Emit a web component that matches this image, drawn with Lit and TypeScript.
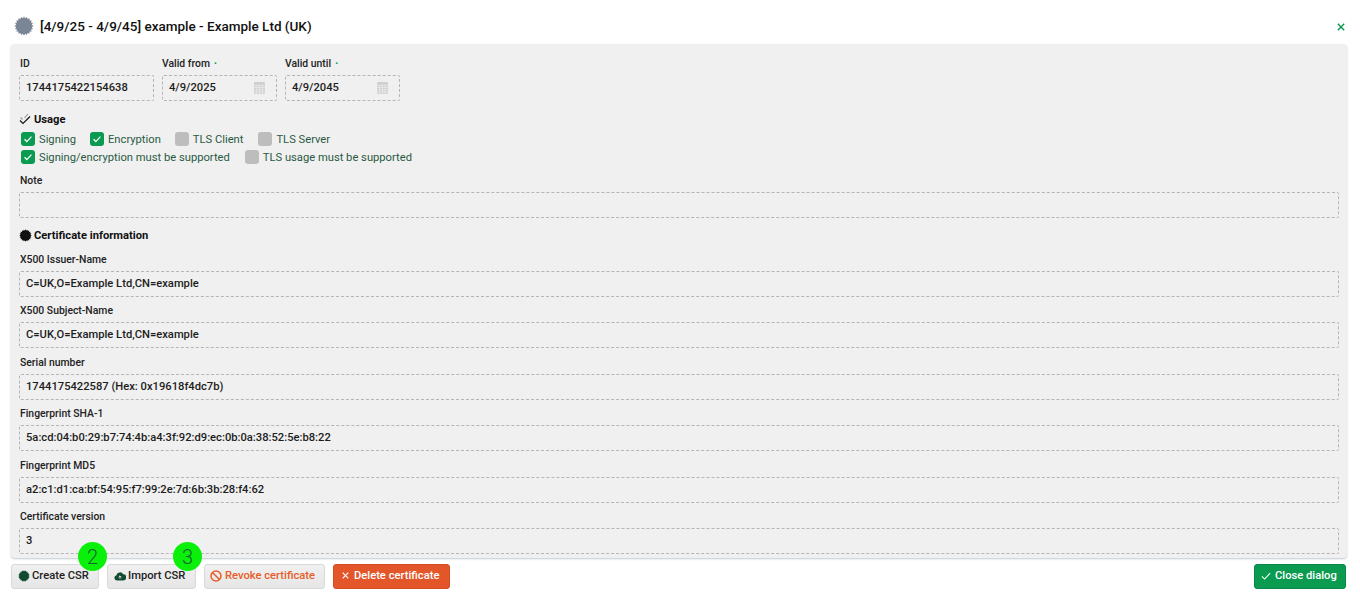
import { LitElement, html, css, svg } from "lit";
import { customElement } from "lit/decorators.js";

const seal = (size: number, color: string) => {
  const pts: string[] = [];
  const n = 20;
  for (let i = 0; i < n * 2; i++) {
    const r = i % 2 ? 9.4 : 11.4;
    const a = (Math.PI * i) / n;
    pts.push(`${(12 + r * Math.sin(a)).toFixed(2)},${(12 - r * Math.cos(a)).toFixed(2)}`);
  }
  return html`<svg class="ic" width=${size} height=${size} viewBox="0 0 24 24">${svg`<polygon points=${pts.join(" ")} fill=${color}></polygon>`}</svg>`;
};
const check = (color: string, w = 14, sw = 1.6) =>
  html`<svg class="ic" width=${w} height=${w} viewBox="0 0 16 16" fill="none" stroke=${color} stroke-width=${sw}><path d="M2.5 8.5l3.6 3.6 7.4-8"></path></svg>`;
const cross = (color: string, w = 10, sw = 1.8) =>
  html`<svg class="ic" width=${w} height=${w} viewBox="0 0 10 10" fill="none" stroke=${color} stroke-width=${sw}><path d="M1 1l8 8M9 1l-8 8"></path></svg>`;
const calendar = html`<svg class="cal" width="11" height="12" viewBox="0 0 12 13"><rect width="12" height="13" rx="1" fill="#cfcfcf"></rect><path d="M0 3.5h12M0 6h12M0 8.5h12M0 11h12M3 3v10M6 3v10M9 3v10" stroke="#f0f0f0" stroke-width=".7"></path></svg>`;

@customElement("app-root")
export class AppRoot extends LitElement {
  static styles = css`
    :host { display: block; width: 1360px; height: 596px; position: relative; overflow: hidden; background: #fff; font-family: Roboto, "Liberation Sans", sans-serif; color: #1a1a1a; font-size: 11.2px; }
    .ic { flex: none; display: block; }
    .head { height: 44px; display: flex; align-items: center; gap: 6px; padding: 7px 15px 0 14px; box-sizing: border-box; }
    .title { font-size: 13.5px; font-weight: 500; color: #111; flex: 1; }
    .closex { position: relative; top: 1px; }
    .panel { margin: 0 13px 0 11px; height: 514px; box-sizing: border-box; background: #f0f0f0; border-radius: 4px; padding: 10px 8px 0; box-shadow: 0 1px 2px rgba(120,130,150,.45); }
    .row { display: flex; gap: 8px; }
    .lbl { height: 21px; line-height: 20px; font-size: 10.4px; font-weight: 500; color: #222; white-space: nowrap; padding-left: 1px; }
    .lbl.flush { padding-left: 0; }
    .req { color: #0a9a50; font-size: 8px; margin-left: 4px; position: relative; top: -1px; }
    .in { height: 26px; box-sizing: border-box; border: 1px dashed #b5b5b5; border-radius: 2px; padding: 0 6px 1px; display: flex; align-items: center; justify-content: space-between; font-size: 11.2px; font-weight: 500; color: #1d1d1d; }
    .f { height: 51.5px; }
    .id { width: 135px; }
    .date { width: 115px; }
    .cal { margin-right: 5px; }
    .sec { height: 20px; display: flex; align-items: center; gap: 3px; font-size: 11.2px; font-weight: 700; color: #111; }
    .usage { margin-top: 8px; margin-bottom: 1px; }
    .checks { display: flex; align-items: center; height: 18px; margin-left: 2px; }
    .cb { display: flex; align-items: center; gap: 4px; font-size: 11.2px; color: #2a5a42; white-space: nowrap; }
    .box { width: 14px; height: 14px; border-radius: 3px; background: #bdbdbd; display: flex; align-items: center; justify-content: center; }
    .box.on { background: #0a9a50; }
    .note { margin-top: 5px; height: 49px; }
    .note .lbl { height: 20px; margin-bottom: 1px; }
    .cert { margin-top: 5px; margin-bottom: 4.5px; gap: 2px; }
    .btns { display: flex; gap: 8px; padding: 5.5px 14px 0 11px; }
    .btn { height: 25px; box-sizing: border-box; border-radius: 3px; display: flex; align-items: center; gap: 2px; padding: 0 0 1px 6px; font-size: 11.2px; font-weight: 500; background: linear-gradient(#f0f0f0, #e6e6e6); border: 1px solid #d8d8d8; color: #222; white-space: nowrap; }
    .csr { width: 88px; }
    .imp { width: 89px; }
    .rev { width: 121px; color: #e85d2a; padding-left: 5px; gap: 3px; }
    .del { width: 117px; color: #fff; background: #e2562a; border-color: #d44c22; gap: 5px; padding-left: 8px; }
    .spacer { flex: 1; }
    .ok { width: 92px; color: #fff; background: #0a9a50; border-color: #08884a; padding-left: 5px; gap: 3px; }
    .badge { position: absolute; top: 542px; width: 29px; height: 29px; border-radius: 50%; background: #0bf00b; color: #0b6a2a; font-size: 20px; font-weight: 300; display: flex; align-items: center; justify-content: center; }
    .b2 { left: 78px; }
    .b3 { left: 173px; }
  `;

  private field(label: string, value: string) {
    return html`<div class="f"><div class="lbl">${label}</div><div class="in">${value}</div></div>`;
  }
  private cb(label: string, on: boolean, mr: number) {
    return html`<div class="cb" style="margin-right:${mr}px"><span class="box ${on ? "on" : ""}">${on ? check("#fff", 10, 2) : ""}</span>${label}</div>`;
  }

  render() {
    return html`
      <div class="head">
        ${seal(20, "#7a8696")}
        <span class="title">[4/9/25 - 4/9/45] example - Example Ltd (UK)</span>
        <span class="closex">${cross("#0a9a50", 8, 1.8)}</span>
      </div>
      <div class="panel">
        <div class="row">
          <div><div class="lbl">ID</div><div class="in id">1744175422154638</div></div>
          <div><div class="lbl flush">Valid from<span class="req">•</span></div><div class="in date">4/9/2025${calendar}</div></div>
          <div><div class="lbl flush">Valid until<span class="req">•</span></div><div class="in date">4/9/2045${calendar}</div></div>
        </div>
        <div class="sec usage">
          <svg class="ic" width="12" height="12" viewBox="0 0 12 12" fill="none" stroke="#111" stroke-width="1.1"><path d="M1 7.5l3 3 7-7"></path><path d="M1.5 4.5l2 2M5.5 5l3.5-4" stroke="#999"></path></svg>
          Usage
        </div>
        <div class="checks">${this.cb("Signing", true, 14)}${this.cb("Encryption", true, 14)}${this.cb("TLS Client", false, 15)}${this.cb("TLS Server", false, 0)}</div>
        <div class="checks">${this.cb("Signing/encryption must be supported", true, 15)}${this.cb("TLS usage must be supported", false, 0)}</div>
        <div class="note"><div class="lbl">Note</div><div class="in"></div></div>
        <div class="sec cert">${seal(13, "#111")}Certificate information</div>
        ${this.field("X500 Issuer-Name", "C=UK,O=Example Ltd,CN=example")}
        ${this.field("X500 Subject-Name", "C=UK,O=Example Ltd,CN=example")}
        ${this.field("Serial number", "1744175422587 (Hex: 0x19618f4dc7b)")}
        ${this.field("Fingerprint SHA-1", "5a:cd:04:b0:29:b7:74:4b:a4:3f:92:d9:ec:0b:0a:38:52:5e:b8:22")}
        ${this.field("Fingerprint MD5", "a2:c1:d1:ca:bf:54:95:f7:99:2e:7d:6b:3b:28:f4:62")}
        ${this.field("Certificate version", "3")}
      </div>
      <div class="btns">
        <div class="btn csr">${seal(12, "#124a32")}Create CSR</div>
        <div class="btn imp">
          <svg class="ic" width="12" height="10" viewBox="0 0 13 11"><path d="M3 10.5a3 3 0 0 1-.4-5.9A4 4 0 0 1 10 3.6a3.4 3.4 0 0 1 0 6.9z" fill="#124a32"></path><path d="M6.5 8.5V5.5M5 6.8l1.5-1.5L8 6.8" stroke="#f0f0f0" stroke-width="1" fill="none"></path></svg>
          Import CSR
        </div>
        <div class="btn rev">
          <svg class="ic" width="12" height="12" viewBox="0 0 12 12" fill="none" stroke="#e85d2a" stroke-width="1.5"><circle cx="6" cy="6" r="5"></circle><path d="M2.5 2.5l7 7"></path></svg>
          Revoke certificate
        </div>
        <div class="btn del">${cross("#fff", 7, 1.6)}Delete certificate</div>
        <div class="spacer"></div>
        <div class="btn ok">${check("#fff", 12, 1.4)}Close dialog</div>
      </div>
      <div class="badge b2">2</div>
      <div class="badge b3">3</div>
    `;
  }
}
